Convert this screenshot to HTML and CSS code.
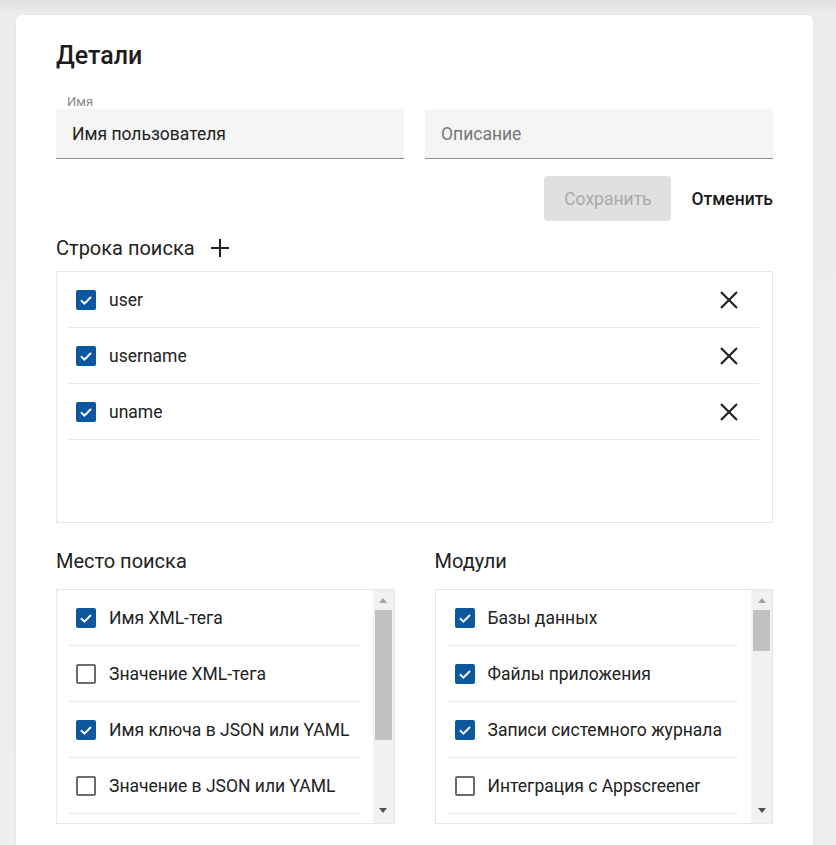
FILE: index.html
```html
<!DOCTYPE html>
<html lang="ru">
<head>
<meta charset="utf-8">
<title>Детали</title>
<link rel="stylesheet" href="styles.css">
</head>
<body>
<div class="card">
  <h1 class="title">Детали</h1>

  <div class="fields">
    <div class="field">
      <div class="field-label">Имя</div>
      <div class="input"><span class="value">Имя пользователя</span></div>
    </div>
    <div class="field">
      <div class="field-label"></div>
      <div class="input"><span class="placeholder">Описание</span></div>
    </div>
  </div>

  <div class="actions">
    <button class="btn-save" disabled>Сохранить</button>
    <button class="btn-cancel">Отменить</button>
  </div>

  <div class="section-head">
    <span>Строка поиска</span>
    <svg class="plus" width="18" height="18" viewBox="0 0 18 18"><path d="M9 0V18M0 9H18" stroke="#222" stroke-width="2" fill="none"/></svg>
  </div>

  <div class="search-box">
    <div class="row">
      <span class="cb on"><svg width="20" height="20" viewBox="0 0 20 20"><path d="M5 10.3L8.4 13.6L15 7" stroke="#fff" stroke-width="2" fill="none"/></svg></span>
      <span class="row-text">user</span>
      <svg class="xicon" width="18" height="18" viewBox="0 0 18 18"><path d="M1 1L17 17M17 1L1 17" stroke="#222" stroke-width="2.2" fill="none"/></svg>
    </div>
    <div class="row">
      <span class="cb on"><svg width="20" height="20" viewBox="0 0 20 20"><path d="M5 10.3L8.4 13.6L15 7" stroke="#fff" stroke-width="2" fill="none"/></svg></span>
      <span class="row-text">username</span>
      <svg class="xicon" width="18" height="18" viewBox="0 0 18 18"><path d="M1 1L17 17M17 1L1 17" stroke="#222" stroke-width="2.2" fill="none"/></svg>
    </div>
    <div class="row">
      <span class="cb on"><svg width="20" height="20" viewBox="0 0 20 20"><path d="M5 10.3L8.4 13.6L15 7" stroke="#fff" stroke-width="2" fill="none"/></svg></span>
      <span class="row-text">uname</span>
      <svg class="xicon" width="18" height="18" viewBox="0 0 18 18"><path d="M1 1L17 17M17 1L1 17" stroke="#222" stroke-width="2.2" fill="none"/></svg>
    </div>
  </div>

  <div class="columns">
    <div class="col">
      <div class="section-head">Место поиска</div>
      <div class="list-box">
        <div class="list">
          <div class="row"><span class="cb on"><svg width="20" height="20" viewBox="0 0 20 20"><path d="M5 10.3L8.4 13.6L15 7" stroke="#fff" stroke-width="2" fill="none"/></svg></span><span class="row-text">Имя XML-тега</span></div>
          <div class="row"><span class="cb"></span><span class="row-text">Значение XML-тега</span></div>
          <div class="row"><span class="cb on"><svg width="20" height="20" viewBox="0 0 20 20"><path d="M5 10.3L8.4 13.6L15 7" stroke="#fff" stroke-width="2" fill="none"/></svg></span><span class="row-text">Имя ключа в JSON или YAML</span></div>
          <div class="row"><span class="cb"></span><span class="row-text">Значение в JSON или YAML</span></div>
        </div>
        <div class="scrollbar">
          <span class="arrow up"></span>
          <span class="track"><span class="thumb thumb-long"></span></span>
          <span class="arrow down"></span>
        </div>
      </div>
    </div>
    <div class="col">
      <div class="section-head">Модули</div>
      <div class="list-box">
        <div class="list">
          <div class="row"><span class="cb on"><svg width="20" height="20" viewBox="0 0 20 20"><path d="M5 10.3L8.4 13.6L15 7" stroke="#fff" stroke-width="2" fill="none"/></svg></span><span class="row-text">Базы данных</span></div>
          <div class="row"><span class="cb on"><svg width="20" height="20" viewBox="0 0 20 20"><path d="M5 10.3L8.4 13.6L15 7" stroke="#fff" stroke-width="2" fill="none"/></svg></span><span class="row-text">Файлы приложения</span></div>
          <div class="row"><span class="cb on"><svg width="20" height="20" viewBox="0 0 20 20"><path d="M5 10.3L8.4 13.6L15 7" stroke="#fff" stroke-width="2" fill="none"/></svg></span><span class="row-text">Записи системного журнала</span></div>
          <div class="row"><span class="cb"></span><span class="row-text">Интеграция с Appscreener</span></div>
        </div>
        <div class="scrollbar">
          <span class="arrow up"></span>
          <span class="track"><span class="thumb thumb-short"></span></span>
          <span class="arrow down"></span>
        </div>
      </div>
    </div>
  </div>
</div>
</body>
</html>
```
FILE: styles.css
```css
html, body {
  margin: 0;
  padding: 0;
  overflow: hidden;
}
body {
  background: linear-gradient(#e1e1e1 0px, #ececec 14px, #eeeeee 100%);
  font-family: Roboto, "Noto Sans", "Liberation Sans", sans-serif;
  color: #222;
  height: 845px;
}
.card {
  margin: 15px 23px 0 16px;
  background: #fff;
  border-radius: 6px;
  box-shadow: 0 1px 3px rgba(0,0,0,0.08);
  padding: 27px 40px 60px;
}
.title {
  margin: 0;
  font-size: 25px;
  line-height: 28px;
  font-weight: 500;
  color: #1c1c1c;
}
.fields {
  display: grid;
  grid-template-columns: 1fr 1fr;
  gap: 21px;
  margin-top: 25px;
}
.field-label {
  height: 14px;
  line-height: 14px;
  font-size: 13px;
  color: #8a8a8a;
  padding-left: 11px;
}
.input {
  height: 50px;
  box-sizing: border-box;
  background: #f5f5f5;
  border-bottom: 1px solid #8c8c8c;
  display: flex;
  align-items: center;
  padding: 0 16px;
  font-size: 17.5px;
}
.value { color: #222; }
.placeholder { color: #767676; }
.actions {
  display: flex;
  justify-content: flex-end;
  align-items: center;
  gap: 20px;
  margin-top: 17px;
}
.btn-save {
  font: inherit;
  font-size: 17.5px;
  width: 127px;
  height: 45px;
  border: none;
  border-radius: 4px;
  background: #e0e0e0;
  color: #a8a8a8;
  padding: 0;
}
.btn-cancel {
  font: inherit;
  font-size: 17.5px;
  font-weight: 500;
  border: none;
  background: none;
  color: #1a1a1a;
  padding: 0;
}
.section-head {
  display: flex;
  align-items: center;
  gap: 16px;
  font-size: 20px;
  line-height: 24px;
  color: #222;
  margin-top: 15px;
}
.search-box {
  margin-top: 11px;
  height: 252px;
  box-sizing: border-box;
  border: 1px solid #e6e6e6;
  padding: 0 13px 0 12px;
}
.row {
  height: 56px;
  box-sizing: border-box;
  border-bottom: 1px solid #e8e8e8;
  display: flex;
  align-items: center;
  padding: 0 0 0 7px;
  font-size: 17.5px;
  color: #222;
  white-space: nowrap;
}
.row-text {
  margin-left: 13px;
  flex: 1;
}
.xicon {
  margin-right: 21px;
}
.cb {
  width: 20px;
  height: 20px;
  box-sizing: border-box;
  border: 2px solid #6b6b6b;
  border-radius: 2px;
  flex: none;
  position: relative;
}
.cb.on {
  background: #0b57a0;
  border-color: #0b57a0;
}
.cb svg {
  position: absolute;
  left: -2px;
  top: -2px;
}
.columns {
  display: grid;
  grid-template-columns: 1fr 1fr;
  gap: 40px;
  margin-top: 11px;
}
.columns .section-head {
  margin-top: 15px;
}
.list-box {
  margin-top: 16px;
  height: 235px;
  box-sizing: border-box;
  border: 1px solid #e6e6e6;
  display: flex;
  overflow: hidden;
}
.list {
  flex: 1;
  min-width: 0;
  padding: 0 13px 0 12px;
  overflow: hidden;
}
.scrollbar {
  width: 21px;
  flex: none;
  background: #f1f1f1;
  display: flex;
  flex-direction: column;
  align-items: center;
  margin-top: -1px;
}
.arrow {
  width: 0;
  height: 0;
  border-left: 4.5px solid transparent;
  border-right: 4.5px solid transparent;
  flex: none;
}
.arrow.up {
  border-bottom: 5px solid #a3a3a3;
  margin: 9px 0 7px;
}
.arrow.down {
  border-top: 5px solid #505050;
  margin: 7px 0 10px;
}
.track {
  flex: 1;
  width: 17px;
}
.thumb {
  display: block;
  width: 17px;
  background: #c1c1c1;
}
.thumb-long { height: 130px; }
.thumb-short { height: 41px; }
```
